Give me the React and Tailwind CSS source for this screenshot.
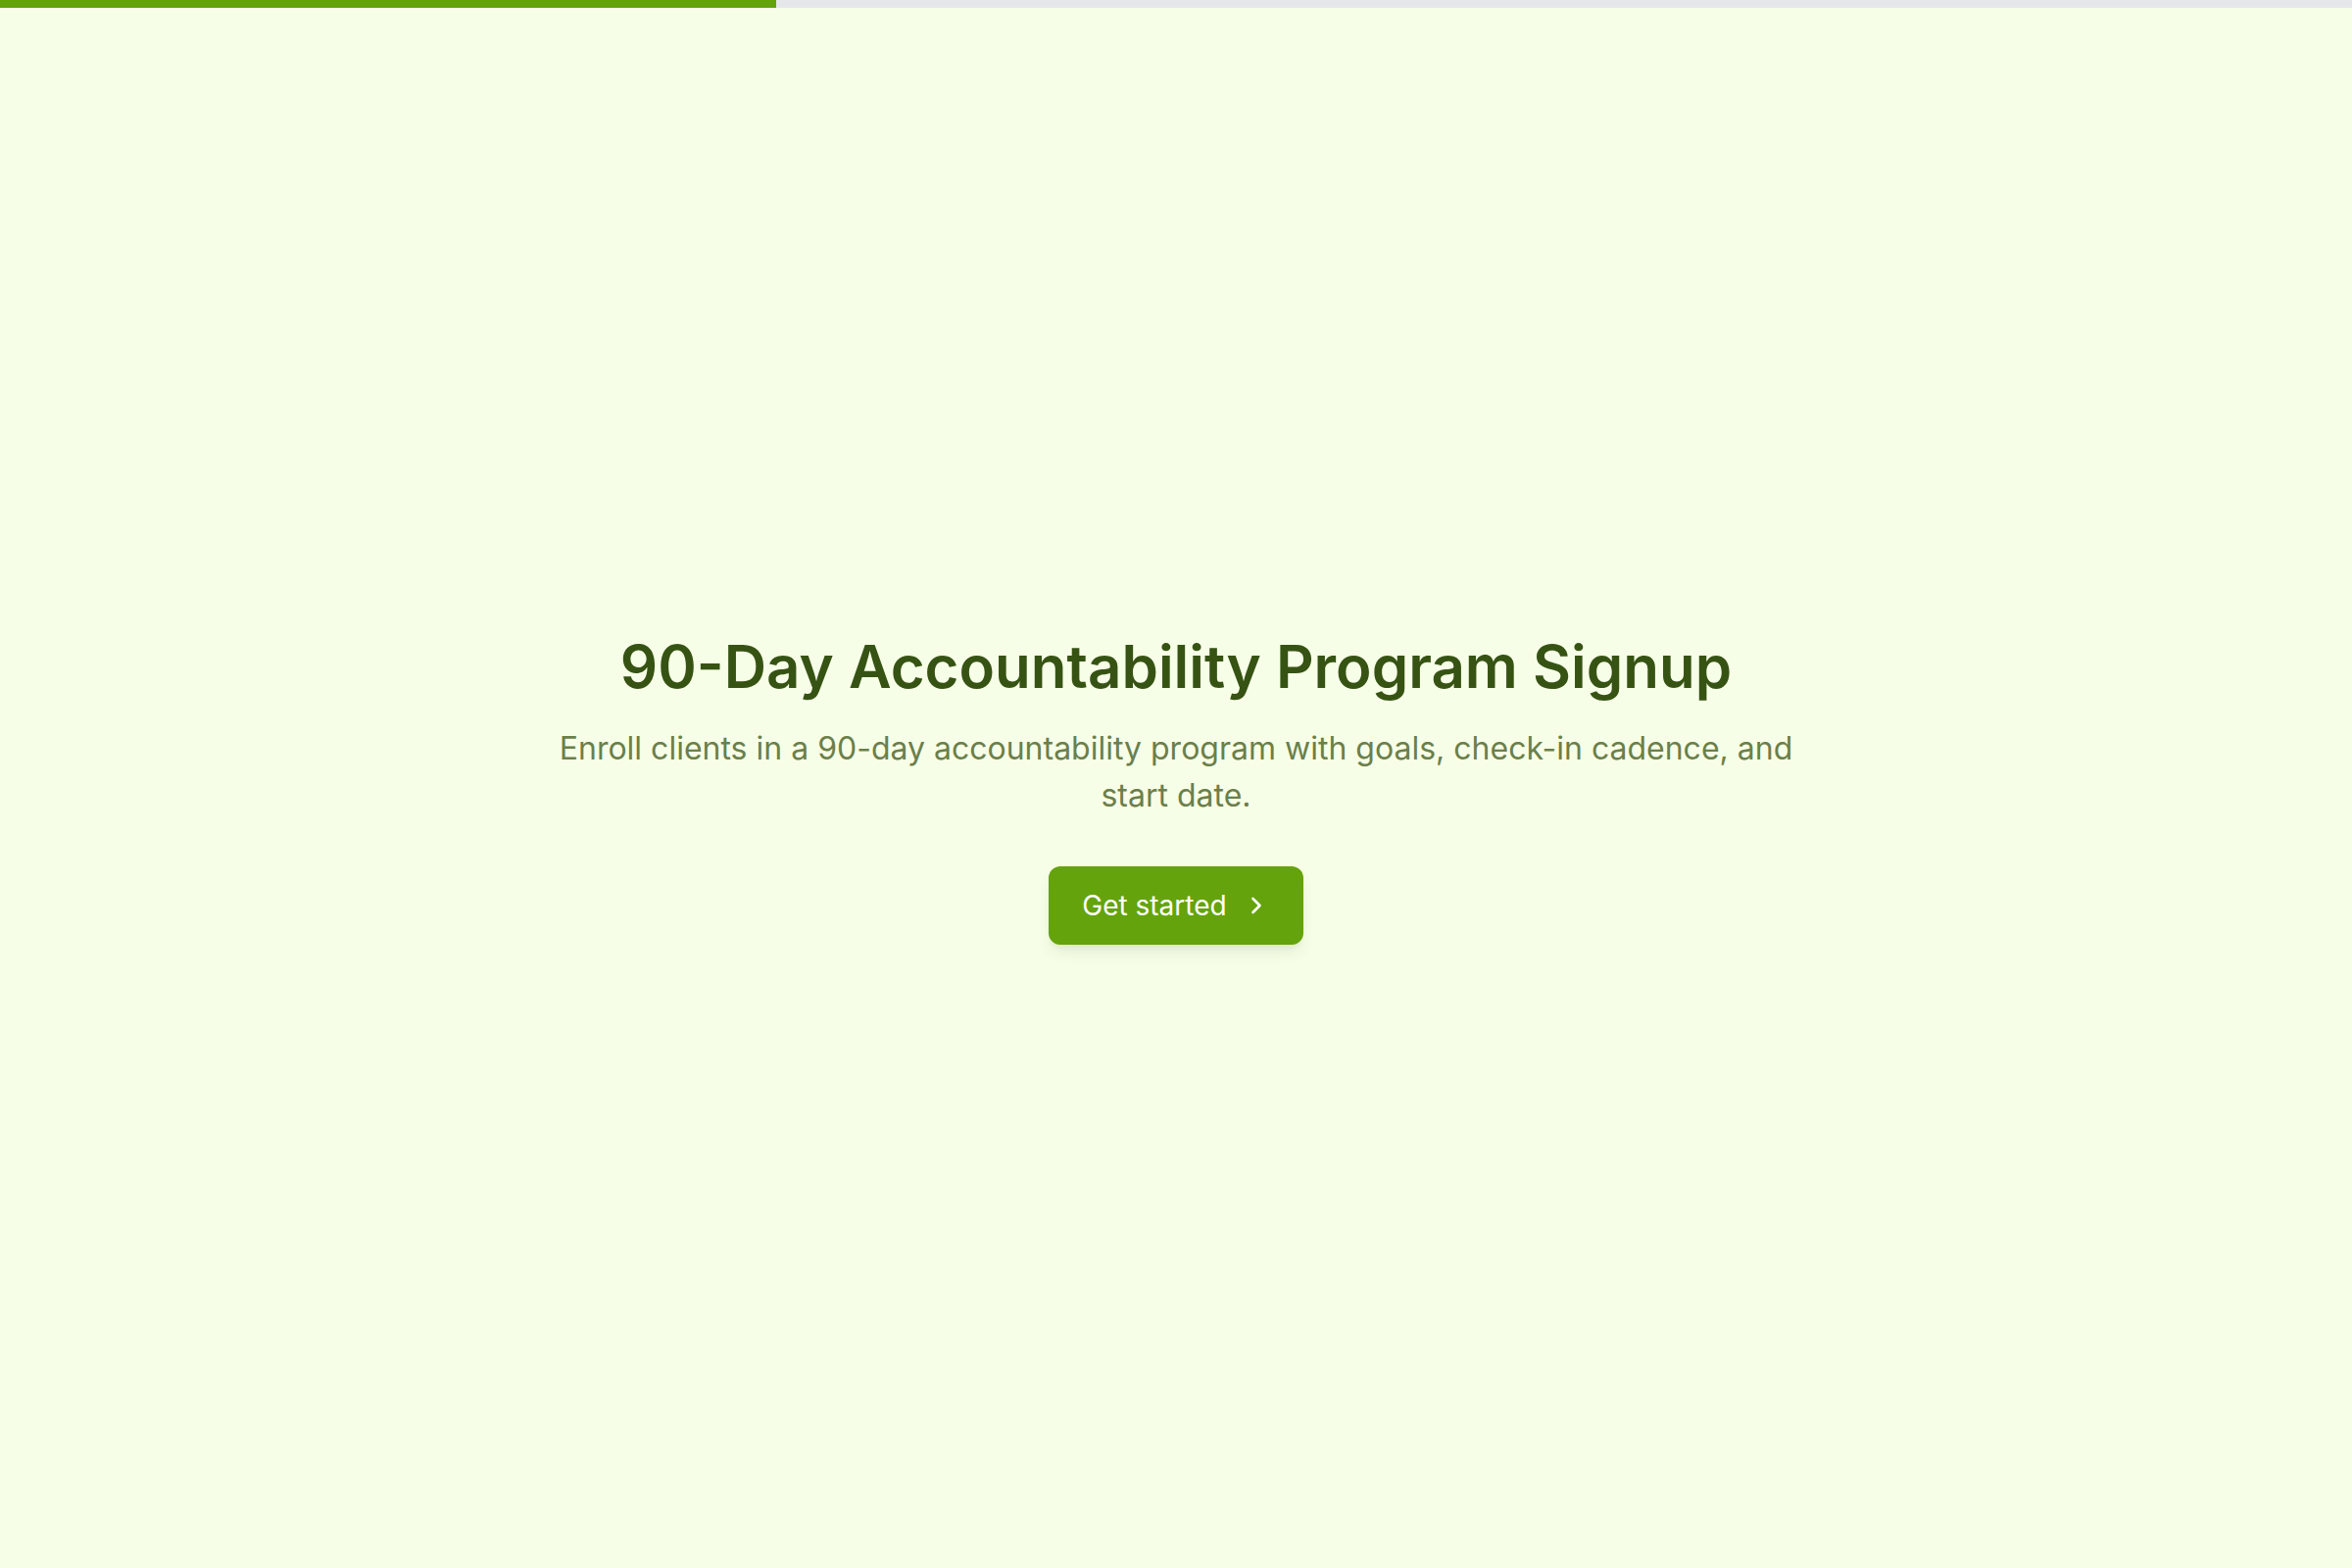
import React from 'react';
import { ChevronRight } from 'lucide-react';

const App = () => {
  const progress = 33;

  return (
    <div
      className="min-h-screen w-full bg-[#f7fee7] flex flex-col"
      style={{ fontFamily: 'Inter, "Noto Sans", sans-serif' }}
    >
      {/* Progress bar */}
      <div className="h-2 w-full bg-gray-200">
        <div className="h-full bg-[#65a30d]" style={{ width: `${progress}%` }} />
      </div>

      {/* Intro */}
      <div className="flex-1 flex flex-col items-center justify-center px-8">
        <h1 className="text-[60px] leading-[72px] font-semibold text-[#365314] text-center">
          90-Day Accountability Program Signup
        </h1>
        <p className="mt-6 max-w-[1300px] text-center text-[32px] leading-[48px] text-[#6b7f4a]">
          Enroll clients in a 90-day accountability program with goals, check-in cadence, and start date.
        </p>
        <button className="mt-12 h-[80px] px-[34px] rounded-xl bg-[#65a30d] text-white text-[28px] font-normal flex items-center gap-4 shadow-lg shadow-lime-900/10">
          Get started
          <ChevronRight className="w-7 h-7" strokeWidth={2.25} />
        </button>
      </div>
    </div>
  );
};

export default App;
